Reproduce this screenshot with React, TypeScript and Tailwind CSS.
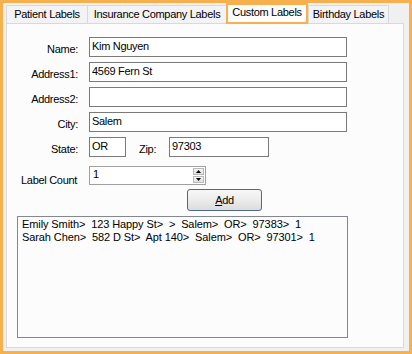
import { useState } from 'react'

const rows = [
  'Emily Smith>  123 Happy St>  >  Salem>  OR>  97383>  1',
  'Sarah Chen>  582 D St>  Apt 140>  Salem>  OR>  97301>  1',
]

function Field({ label, value }: { label: string; value: string }) {
  return (
    <div className="flex items-start h-[20px]">
      <span className="w-[71px] mt-[6px] text-right leading-[13px]">{label}</span>
      <input
        readOnly
        value={value}
        className="ml-[11px] w-[258px] h-[20px] border border-[#7a7a7a] bg-white px-[2px] pb-[2px] leading-[13px] outline-none"
      />
    </div>
  )
}

function Tab({ label, active, width, last }: { label: string; active?: boolean; width: string; last?: boolean }) {
  if (active) {
    return (
      <div
        className={`relative z-10 -mb-[1px] h-[21px] ${width} border-2 border-[#f7b04e] bg-[#fcfcfc] pt-[1px] text-center leading-[13px]`}
      >
        {label}
      </div>
    )
  }
  return (
    <div
      className={`h-[18px] ${width} border-t border-l ${last ? 'border-r' : ''} border-[#d9d9d9] bg-[#f3f2f4] pt-[2px] text-center leading-[13px]`}
    >
      {label}
    </div>
  )
}

export default function App() {
  const [count] = useState('1')

  return (
    <div className="w-[412px] h-[354px] border-[3px] border-[#f7b04e] bg-[#f0f0f0] font-['Liberation_Sans',Arial,sans-serif] text-[11px] tracking-[-0.3px] text-black flex flex-col">
      <div className="flex items-end h-[20px] pl-[3px]">
        <Tab label="Patient Labels" width="w-[81px]" />
        <Tab label="Insurance Company Labels" width="w-[139px]" />
        <Tab label="Custom Labels" width="w-[82px]" active />
        <Tab label="Birthday Labels" width="w-[81px]" last />
      </div>

      <div className="ml-[3px] w-[398px] h-[325px] border border-[#d9d9d9] bg-[#fcfcfc] pt-[13px] flex flex-col">
        <div className="flex flex-col gap-[5px]">
          <Field label="Name:" value="Kim Nguyen" />
          <Field label="Address1:" value="4569 Fern St" />
          <Field label="Address2:" value="" />
          <Field label="City:" value="Salem" />
          <div className="flex items-start h-[20px]">
            <span className="w-[71px] mt-[6px] text-right leading-[13px]">State:</span>
            <input
              readOnly
              value="OR"
              className="ml-[11px] w-[37px] h-[20px] border border-[#7a7a7a] bg-white px-[2px] pb-[2px] leading-[13px] outline-none"
            />
            <span className="ml-[13px] w-[30px] mt-[6px] leading-[13px]">Zip:</span>
            <input
              readOnly
              value="97303"
              className="w-[100px] h-[20px] border border-[#7a7a7a] bg-white px-[2px] pb-[2px] leading-[13px] outline-none"
            />
          </div>
        </div>

        <div className="flex items-start mt-[9px] h-[19px]">
          <span className="ml-[14px] w-[68px] mt-[8px] leading-[13px]">Label Count</span>
          <div className="flex w-[117px] h-[19px] border border-[#a0a0a0] bg-white">
            <span className="flex-1 pl-[3px] leading-[13px] pt-[1px]">{count}</span>
            <div className="flex flex-col gap-px p-px">
              <div className="w-[11px] h-[7px] border border-[#b9b9b9] bg-gradient-to-b from-[#f4f4f4] to-[#e0e0e0] flex items-center justify-center">
                <svg width="5" height="3" viewBox="0 0 5 3"><path d="M2.5 0L5 3H0z" fill="#000" /></svg>
              </div>
              <div className="w-[11px] h-[7px] border border-[#b9b9b9] bg-gradient-to-b from-[#f4f4f4] to-[#e0e0e0] flex items-center justify-center">
                <svg width="5" height="3" viewBox="0 0 5 3"><path d="M0 0H5L2.5 3z" fill="#000" /></svg>
              </div>
            </div>
          </div>
        </div>

        <button className="ml-[180px] mt-[4px] w-[75px] h-[22px] rounded-[3px] border border-[#4f6a86] bg-gradient-to-b from-[#f7f7f7] via-[#ececec] to-[#dcdcdc] leading-[13px]">
          <span className="underline underline-offset-[1px]">A</span>dd
        </button>

        <div className="ml-[10px] mt-[5px] w-[331px] h-[122px] border border-[#828790] bg-[#fcfcfc] px-[4px] pt-[1px] tracking-[-0.1px]">
          {rows.map((r) => (
            <div key={r} className="whitespace-pre leading-[13px]">
              {r}
            </div>
          ))}
        </div>
      </div>
    </div>
  )
}
